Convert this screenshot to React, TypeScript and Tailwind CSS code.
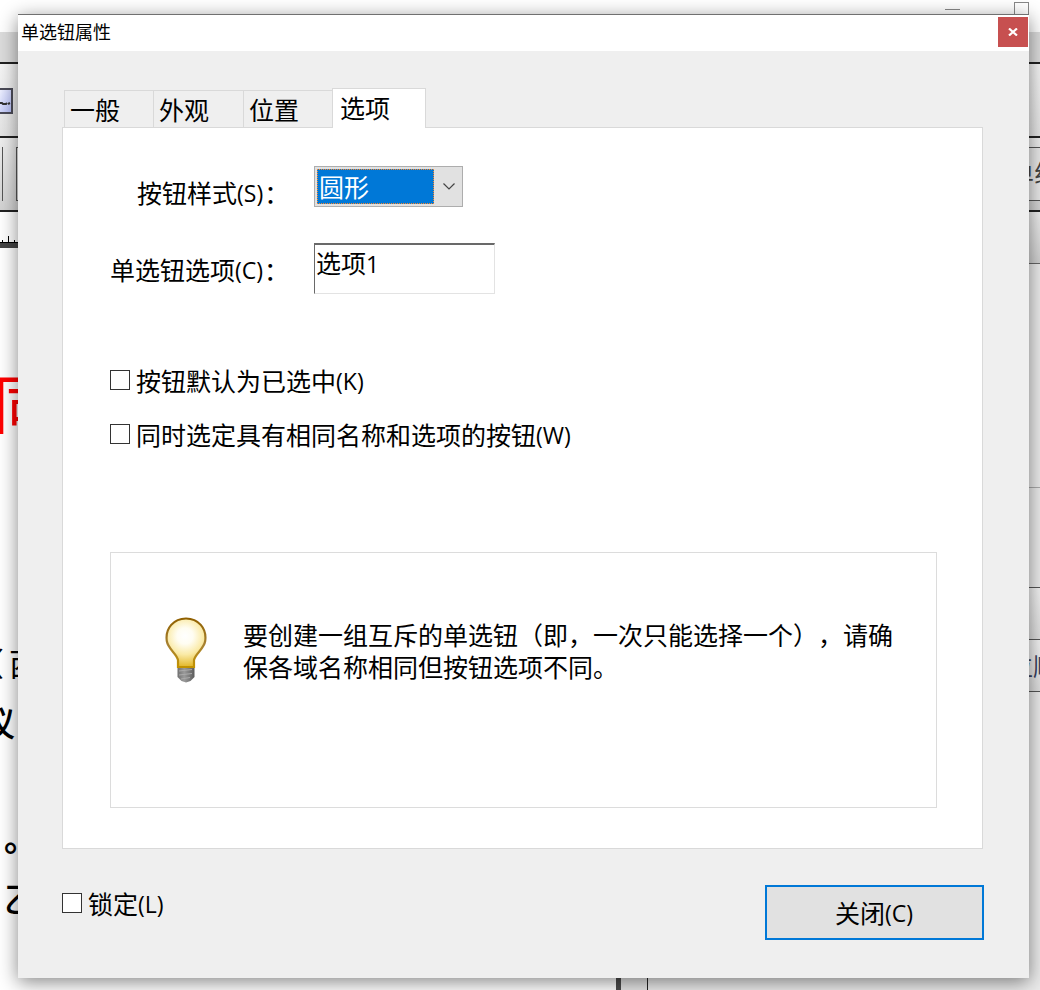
import React from 'react';

interface CheckRowProps {
  label: string;
  hotkey: string;
}

const Hotkey: React.FC<{ children: string }> = ({ children }) => (
  <span className="relative -top-px text-[23px] font-['Open_Sans','Noto_Sans',sans-serif]">({children})</span>
);

const CheckRow: React.FC<CheckRowProps> = ({ label, hotkey }) => (
  <label className="flex h-8 items-start">
    <span className="mt-[5px] mr-[6px] size-5 shrink-0 border border-[#333] bg-white" />
    <span className="leading-[30px] whitespace-nowrap">
      {label}
      <Hotkey>{hotkey}</Hotkey>
    </span>
  </label>
);

const BulbIcon: React.FC = () => (
  <svg width="42" height="66" viewBox="0 0 42 66">
    <defs>
      <radialGradient id="glow" gradientUnits="userSpaceOnUse" cx="20" cy="19" r="32">
        <stop offset="0" stopColor="#fff" />
        <stop offset="0.25" stopColor="#fffdf2" />
        <stop offset="0.58" stopColor="#faeaa6" />
        <stop offset="1" stopColor="#e0b21c" />
      </radialGradient>
      <linearGradient id="rim" x1="0" y1="0" x2="0" y2="1">
        <stop offset="0" stopColor="#906000" />
        <stop offset="0.55" stopColor="#a88232" />
        <stop offset="1" stopColor="#c29200" />
      </linearGradient>
      <linearGradient id="base" x1="0" y1="0" x2="1" y2="0">
        <stop offset="0" stopColor="#707070" />
        <stop offset="0.4" stopColor="#9a9a9a" />
        <stop offset="1" stopColor="#5c5c5c" />
      </linearGradient>
    </defs>
    <path d="M12.500 49h17v11l-4 4-4.500 1.500-4.500-1.500-4-4z" fill="url(#base)" />
    <path d="M14 54l13-1.500M14 58l13-1.500M16 62l9-1.500" stroke="#aaa" strokeWidth="1.200" />
    <path
      d="M13 50V43C12 37 3 32 1.800 24C0 11 9 1.500 21 1.500S42 11 40.200 24C39 32 30 37 29 43V50Z"
      fill="url(#glow)"
      stroke="url(#rim)"
      strokeWidth="2.200"
    />
  </svg>
);

const Backdrop: React.FC = () => (
  <div className="flex h-full flex-col bg-white">
    <div className="flex h-8 shrink-0 justify-end pr-[11px]">
      <span className="mt-[9px] mr-[54px] h-px w-[15px] bg-[#888]" />
      <span className="mt-[2px] h-[15px] w-[15px] border border-[#888]" />
    </div>
    <div className="h-[30px] shrink-0 bg-[#dcdcdc]" />
    <div className="flex h-[76px] shrink-0 border-y-2 border-[#222] bg-linear-to-b from-[#f5f5f5] to-[#e4e4e4] pt-[24px]">
      <div className="flex h-[26px] w-[13px] items-end justify-end border-2 border-l-0 border-[#4b4b58] bg-linear-to-br from-[#eef0ff] to-[#b5bdf4] pb-[6px]">
        <svg width="11" height="5" viewBox="0 0 11 5" fill="none" stroke="#333" strokeWidth="2">
          <path d="M0 2h2l1 1h3l1-1M8 3l2-1" />
        </svg>
      </div>
    </div>
    <div className="flex h-[74px] shrink-0 justify-between border-b-2 border-[#222] bg-linear-to-b from-[#eee] to-[#d2d2d2] pt-[9px]">
      <div className="flex">
        <div className="h-[54px] w-[3px] border-r border-[#555]" />
        <div className="ml-[13px] h-[54px] w-8 border border-[#555]" />
      </div>
      <div className="flex h-[54px] w-8 border-y border-[#555] bg-[#e8e8e8]">
        <div className="pt-[10px] pl-px text-[25px] leading-7 whitespace-nowrap text-[#444]">单线</div>
      </div>
    </div>
    <div className="flex min-h-0 grow">
      <div className="flex w-[616px] shrink-0 flex-col text-black">
        <div className="flex h-[31px] shrink-0 items-end gap-[5px] border-b border-black pl-[2px]">
          <span className="h-[2px] w-px bg-black" />
          <span className="h-[6px] w-px bg-black" />
          <span className="h-[2px] w-px bg-black" />
        </div>
        <div className="h-[5px] shrink-0 bg-[#454545]" />
        <div className="-ml-[7px] mt-[116px] h-[76px] text-[64px] leading-[72px] whitespace-nowrap text-[#f00]">同</div>
        <div className="-ml-[28px] mt-[202px] h-10 text-[32px] leading-10 whitespace-nowrap">（<span className="ml-[5px]">西</span></div>
        <div className="-ml-[19px] mt-[20px] h-10 text-[34px] leading-10 font-medium">议</div>
        <div className="ml-[4px] mt-[75px] h-10 text-[34px] leading-10 font-bold">。</div>
        <div className="ml-[4px] mt-[21px] h-10 text-[34px] leading-10 font-medium">乙</div>
      </div>
      <div className="w-[5px] bg-[#4b4b4b]" />
      <div className="w-[27px] border-r border-[#222] bg-[#e5e5e5]" />
      <div className="flex grow flex-col bg-[#ebebeb]">
        <div className="h-[52px] border-b border-[#666] bg-linear-to-b from-[#eee] to-[#d0d0d0]" />
        <div className="h-[224px] border-b border-[#aaa]" />
        <div className="h-[100px] border-b border-[#555]" />
        <div className="h-[52px] border-b border-[#555] bg-linear-to-b from-[#f2f2f2] to-[#dedede]" />
        <div className="flex h-[52px] items-center justify-end border-b border-[#555] bg-linear-to-b from-[#f2f2f2] to-[#dedede]">
          <span className="-mr-[18px] text-[25px] whitespace-nowrap text-[#38405c]">位顺</span>
        </div>
      </div>
    </div>
  </div>
);

const tabs = [
  { label: '一般', width: 'w-[89px]' },
  { label: '外观', width: 'w-[90px]' },
  { label: '位置', width: 'w-[89px]' },
];

const Dialog: React.FC = () => (
  <div className="absolute top-[14px] left-[18px] flex h-[964px] w-[1011px] flex-col border-t border-[#707070] bg-[#efefef] shadow-[0_4px_18px_rgba(0,0,0,0.48)]">
    <header className="flex h-9 shrink-0 items-start justify-between bg-white pr-px pl-[3px]">
      <h1 className="text-[18px] leading-[33px]">单选钮属性</h1>
      <button className="mt-[2px] flex size-[30px] items-center justify-center bg-[#c75050]">
        <svg width="10" height="8" viewBox="0 0 10 8" stroke="#fff" strokeWidth="2.200">
          <path d="M1 .5l8 7M9 .5l-8 7" />
        </svg>
      </button>
    </header>

    <div className="mt-[37px] ml-[46px] flex h-[39px] items-end">
      {tabs.map(({ label, width }) => (
        <div key={label} className={`h-[37px] border-t border-l border-[#d9d9d9] pl-[5px] leading-[36px] ${width}`}>
          {label}
        </div>
      ))}
      <div className="z-10 -mb-px h-10 w-[94px] border border-b-0 border-[#d9d9d9] bg-white pl-[7px] leading-[36px]">选项</div>
    </div>

    <main className="ml-[44px] flex h-[722px] w-[921px] shrink-0 flex-col border border-[#d9d9d9] bg-white pr-[45px] pl-[47px]">
      <div className="mt-[38px] flex h-[41px]">
        <div className="mt-[8px] w-[204px] pl-[27px] leading-9 whitespace-nowrap">
          按钮样式<Hotkey>S</Hotkey>
          <span className="ml-px">：</span>
        </div>
        <div className="flex w-[149px] border border-[#adadad] bg-[#e1e1e1] p-[2px]">
          <div className="w-[117px] border border-dotted border-[#ff8728] bg-[#0078d7] pl-px leading-[33px] text-white">圆形</div>
          <div className="flex grow items-center justify-center pl-1">
            <svg width="12" height="7" viewBox="0 0 12 7" fill="none" stroke="#444" strokeWidth="1.200">
              <path d="M.5 .5L6 6L11.500 .5" />
            </svg>
          </div>
        </div>
      </div>

      <div className="mt-9 flex h-[51px]">
        <div className="mt-[8px] w-[204px] leading-9 whitespace-nowrap">
          单选钮选项<Hotkey>C</Hotkey>
          <span className="ml-px">：</span>
        </div>
        <div className="w-[181px] border border-t-2 border-t-[#696969] border-r-[#e3e3e3] border-b-[#e3e3e3] border-l-[#696969] pl-px leading-[35px]">
          选项<span className="text-[23px] font-['Open_Sans',sans-serif]">1</span>
        </div>
      </div>

      <div className="mt-[71px] flex flex-col gap-[22px]">
        <CheckRow label="按钮默认为已选中" hotkey="K" />
        <CheckRow label="同时选定具有相同名称和选项的按钮" hotkey="W" />
      </div>

      <section className="mt-[101px] flex h-[256px] w-[827px] border border-[#dcdcdc] pt-[64px] pl-[54px]">
        <BulbIcon />
        <p className="mt-px ml-9 w-[652px] leading-8 [text-spacing-trim:space-all]">
          要创建一组互斥的单选钮（即，一次只能选择一个），请确
          <br />
          保各域名称相同但按钮选项不同。
        </p>
      </section>
    </main>

    <footer className="mt-9 flex justify-between pr-[45px] pl-[44px]">
      <div className="mt-[3px]">
        <CheckRow label="锁定" hotkey="L" />
      </div>
      <button className="h-[55px] w-[219px] border-2 border-[#0078d7] bg-[#e1e1e1] pr-px leading-[50px]">
        关闭<Hotkey>C</Hotkey>
      </button>
    </footer>
  </div>
);

const App: React.FC = () => (
  <div className="relative h-[990px] w-[1040px] overflow-hidden text-[25px] text-black font-['Noto_Sans_CJK_SC',sans-serif]">
    <Backdrop />
    <Dialog />
  </div>
);

export default App;
